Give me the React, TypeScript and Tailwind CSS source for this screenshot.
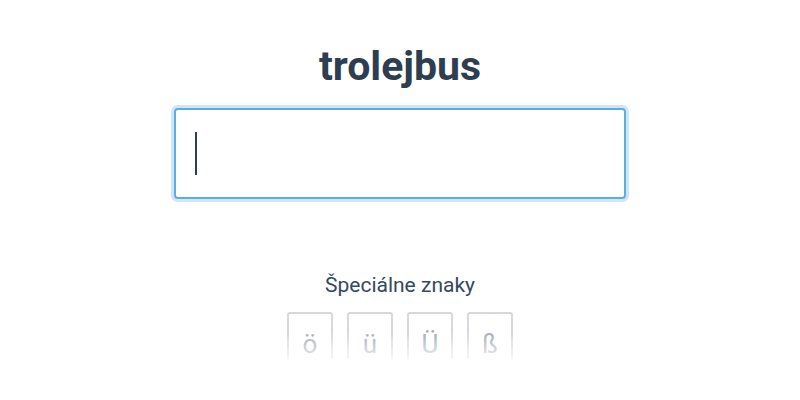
const specialChars = ["ö", "ü", "Ü", "ß"];

export default function App() {
  return (
    <main className="min-h-screen bg-white font-['Roboto',sans-serif]">
      <section className="flex flex-col items-center pt-[44px]">
        {/* Word to type */}
        <h1 className="text-[41px] leading-[44px] font-bold text-[#2c3e50]">
          trolejbus
        </h1>

        {/* Answer field (focused) */}
        <div className="mt-[20px] w-[452px] h-[91px] rounded-[4px] border-2 border-[#5dade2] ring-[3px] ring-[#cfe6f7] bg-white flex items-center pl-[19px]">
          <span className="block w-[2px] h-[43px] bg-[#2c3e50]"></span>
        </div>

        {/* Special characters */}
        <p className="mt-[72px] text-[21px] leading-[28px] text-[#34495e]">
          Špeciálne znaky
        </p>
        <div className="relative mt-[13px]">
          <div className="flex gap-[14px]">
            {specialChars.map((c) => (
              <button
                key={c}
                className="w-[46px] h-[60px] rounded-[3px] border-2 border-[#d5d9dd] bg-white text-[26px] text-[#a3acb4] flex items-start justify-center pt-[11px]"
              >
                {c}
              </button>
            ))}
          </div>
          {/* bottom fade */}
          <div className="absolute left-[-4px] right-[-4px] bottom-0 h-[40px] bg-gradient-to-b from-white/0 via-white/60 to-white"></div>
          <div className="absolute left-[-4px] right-[-4px] top-[47px] bottom-0 bg-white"></div>
        </div>
      </section>
    </main>
  );
}
